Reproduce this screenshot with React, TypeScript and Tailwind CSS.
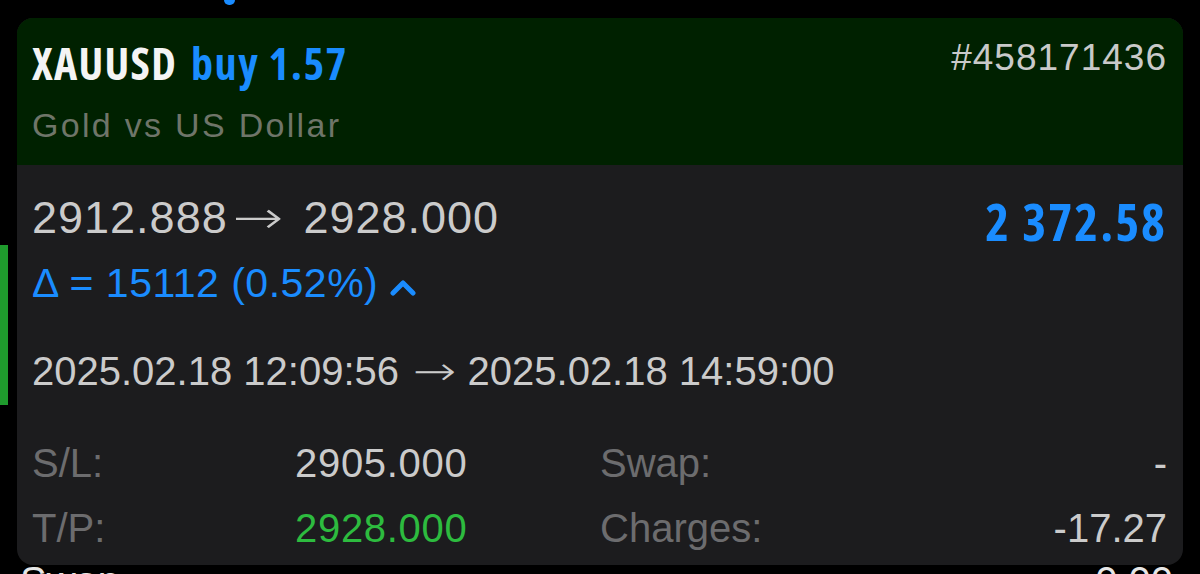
export default function App() {
  const cond = "font-['Open_Sans',sans-serif] font-stretch-condensed font-bold";
  return (
    <div className="w-[1200px] h-[574px] bg-black overflow-hidden font-['Liberation_Sans',Arial,sans-serif] leading-none">
      <div className="h-[18px] relative">
        <div className="absolute left-[224px] top-0 w-[11px] h-[5px] rounded-b-full bg-[#1a8cff]" />
      </div>
      <div className="flex">
        <div className="w-[17px] shrink-0 pt-[227px]">
          <div className="w-[8px] h-[160px] bg-[#1f9b2d]" />
        </div>
        <div className="w-[1166px] shrink-0 rounded-[16px] overflow-hidden bg-[#1c1c1e]">
          <div className="h-[147px] bg-[#002100] pl-[15px] pr-[16px]">
            <div className="flex justify-between items-start">
              <div className={`${cond} mt-[23px] text-[44px] leading-none whitespace-nowrap`}>
                <span className="text-[#f4f4f4] tracking-[1.3px]">XAUUSD</span>
                <span className="text-[#1a8cff] tracking-[1.5px] ml-[14px]">buy 1.57</span>
              </div>
              <div className="mt-[21px] text-[37px] leading-none text-[#c9c9c9] tracking-[1px]">#458171436</div>
            </div>
            <div className="mt-[23px] text-[34px] leading-none text-[#6f7569] tracking-[2.3px]">Gold vs US Dollar</div>
          </div>
          <div className="h-[400px] pl-[15px] pr-[16px] pt-[30px]">
            <div className="h-[52px] flex justify-between items-start">
              <div className="text-[45px] leading-none text-[#cbcbcb] tracking-[1px] whitespace-nowrap">
                <span>2912.888</span>
                <span className="inline-block font-['DejaVu_Sans',sans-serif] font-extralight scale-x-[1.35] ml-[11px] mr-[26px]">→</span>
                <span>2928.000</span>
              </div>
              <div className={`${cond} mt-[1px] text-[51px] leading-none text-[#1a8cff] tracking-[2px] whitespace-nowrap`}>2 372.58</div>
            </div>
            <div className="mt-[16px] h-[41px] flex items-start text-[#1a8cff]">
              <span className="text-[41px] leading-none tracking-[0.5px] whitespace-nowrap">Δ = 15112 (0.52%)</span>
              <svg className="ml-[12px] mt-[16px]" width="26" height="17" viewBox="0 0 26 17">
                <polyline points="3,14 13,4 23,14" fill="none" stroke="#1a8cff" strokeWidth="5" strokeLinecap="round" strokeLinejoin="round" />
              </svg>
            </div>
            <div className="mt-[47px] text-[40px] leading-none text-[#cbcbcb] whitespace-nowrap">
              <span>2025.02.18 12:09:56</span>
              <span className="inline-block font-['DejaVu_Sans',sans-serif] font-extralight scale-x-[1.3] ml-[19px] mr-[16px]">→</span>
              <span>2025.02.18 14:59:00</span>
            </div>
            <div className="mt-[52px] grid grid-cols-[263px_305px_1fr_auto] gap-y-[25px] text-[40px] leading-none">
              <div className="text-[#6c6c6e]">S/L:</div>
              <div className="text-[#cbcbcb] tracking-[0.7px]">2905.000</div>
              <div className="text-[#6c6c6e]">Swap:</div>
              <div className="text-[#cbcbcb] text-right">-</div>
              <div className="text-[#6c6c6e]">T/P:</div>
              <div className="text-[#2dbb3f] tracking-[0.7px]">2928.000</div>
              <div className="text-[#6c6c6e]">Charges:</div>
              <div className="text-[#cbcbcb] text-right">-17.27</div>
            </div>
          </div>
        </div>
      </div>
      <div className="-mt-[4px] flex justify-between pl-[20px] pr-[27px] text-[40px] leading-none text-[#e6e6e6]">
        <span>Swap</span>
        <span>0.00</span>
      </div>
    </div>
  );
}
